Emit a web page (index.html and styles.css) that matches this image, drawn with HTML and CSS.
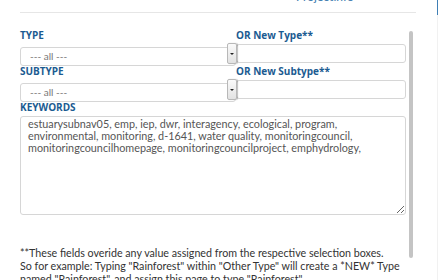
FILE: index.html
```html
<!DOCTYPE html>
<html lang="en">
  <head>
    <meta charset="UTF-8" />
    <meta name="viewport" content="width=device-width, initial-scale=1.0" />
    <title>Project info</title>
    <link rel="stylesheet" href="styles.css">
  </head>
  <body>
    <div class="panel">
      <div class="tabs">
        <span class="tab">Projectinfo</span>
      </div>

      <div class="panel-body">
        <form class="fields">
          <div class="field-grid">
            <label class="lbl">TYPE</label>
            <label class="lbl">OR New Type**</label>
            <div class="select-wrap">
              <select><option>--- all ---</option></select>
              <span class="arrow"></span>
            </div>
            <input class="text" type="text" />

            <label class="lbl">SUBTYPE</label>
            <label class="lbl">OR New Subtype**</label>
            <div class="select-wrap">
              <select><option>--- all ---</option></select>
              <span class="arrow"></span>
            </div>
            <input class="text" type="text" />
          </div>

          <label class="lbl">KEYWORDS</label>
          <textarea class="keywords">estuarysubnav05, emp, iep, dwr, interagency, ecological, program, environmental, monitoring, d-1641, water quality, monitoringcouncil, monitoringcouncilhomepage, monitoringcouncilproject, emphydrology,</textarea>

          <p class="note">
            **These fields overide any value assigned from the respective selection boxes.<br />
            So for example: Typing "Rainforest" within "Other Type" will create a *NEW* Type<br />
            named "Rainforest", and assign this page to type "Rainforest".
          </p>
        </form>

        <!-- scroll thumb of the panel -->
        <div class="scroll-thumb"></div>
      </div>
    </div>
  </body>
</html>
```

FILE: styles.css
```css
* {
  box-sizing: border-box;
  margin: 0;
  padding: 0;
}

body {
  font-family: "Lato", "Open Sans", sans-serif;
  background: #fff;
  color: #333;
  height: 100vh;
  overflow: hidden;
}

.panel {
  position: relative;
  width: 438px;
  height: 280px;
  border-right: 1px solid #f1f1f1;
}

/* blue edge of the active tab, top right */
.panel::before {
  content: "";
  position: absolute;
  right: -1px;
  top: 0;
  width: 1px;
  height: 15px;
  background: #3f7fb5;
}

.tabs {
  display: flow-root;
  margin: 0 21px 0 20px;
  height: 13px;
  border-bottom: 1px solid #e6e6e6;
  padding-left: 276px;
}

.tab {
  display: block;
  margin-top: -9px;
  font-size: 12px;
  line-height: 12px;
  color: #3a78ad;
}

.panel-body {
  display: flex;
  gap: 3px;
  padding-left: 20px;
}

.fields {
  width: 386px;
  display: flex;
  flex-direction: column;
}

.field-grid {
  display: grid;
  grid-template-columns: 216px 170px;
  margin-top: 14px;
}

.lbl {
  display: block;
  font-family: "Open Sans", sans-serif;
  font-weight: 700;
  font-size: 10px;
  line-height: 17px;
  color: #1b5b91;
}

.select-wrap {
  position: relative;
  height: 19px;
}

.select-wrap select {
  appearance: none;
  width: 100%;
  height: 19px;
  border: 1px solid #d6d6d6;
  border-radius: 3px;
  background: #fff;
  font-family: inherit;
  font-size: 10px;
  color: #777;
  padding-left: 9px;
}

.arrow {
  position: absolute;
  right: -1px;
  top: -1px;
  width: 10px;
  height: 21px;
  border: 1px solid #b8b8b8;
  border-radius: 2px;
  background: linear-gradient(#fafafa, #e2e2e2);
  box-shadow: 1px 0 1px rgba(0, 0, 0, 0.25);
}

.arrow::after {
  content: "";
  position: absolute;
  left: 2px;
  top: 9px;
  border-left: 2px solid transparent;
  border-right: 2px solid transparent;
  border-top: 2px solid #222;
}

.text {
  height: 19px;
  border: 1px solid #d6d6d6;
  border-radius: 3px;
  background: #fff;
}

.keywords {
  height: 99px;
  resize: vertical;
  border: 1px solid #d6d6d6;
  border-radius: 3px;
  padding: 1px 7px;
  font-family: inherit;
  font-size: 10.8px;
  line-height: 12px;
  color: #555;
}

.note {
  margin-top: 31px;
  font-size: 10.7px;
  line-height: 13px;
  color: #333;
  white-space: nowrap;
}

.scroll-thumb {
  width: 4px;
  height: 227px;
  margin-top: 18px;
  border-radius: 2px;
  background: #c4c4c4;
}
```
